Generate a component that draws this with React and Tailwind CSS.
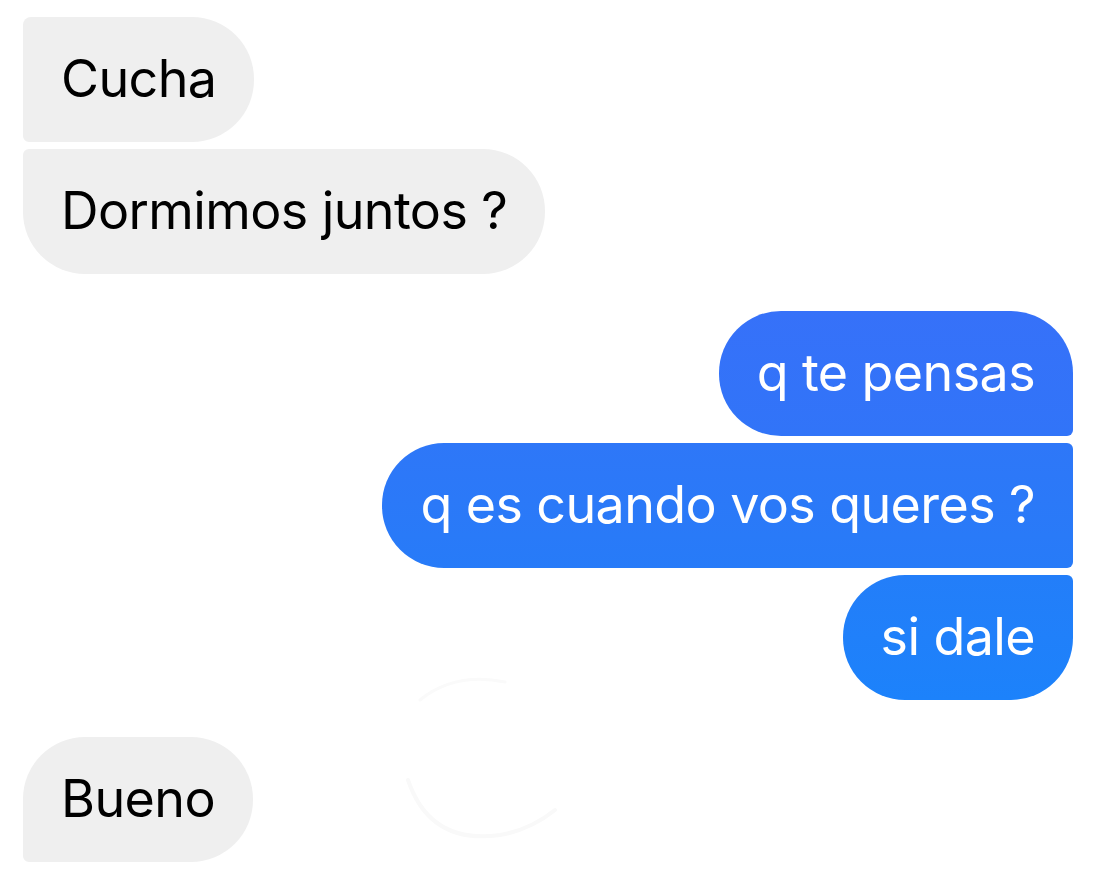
import React from 'react';

// rounded corners per position in a run of messages
const incoming = [
  { id: 1, text: 'Cucha', shape: 'rounded-tl-[8px] rounded-bl-[6px] rounded-r-[62px]' },
  { id: 2, text: 'Dormimos juntos ?', shape: 'rounded-tl-[6px] rounded-bl-[62px] rounded-r-[62px]' },
];

const outgoing = [
  { id: 3, text: 'q te pensas', shape: 'rounded-l-[62px] rounded-tr-[62px] rounded-br-[6px]', bg: 'from-[#3671f9] to-[#3174f8]' },
  { id: 4, text: 'q es cuando vos queres ?', shape: 'rounded-l-[62px] rounded-r-[6px]', bg: 'from-[#2e77f8] to-[#277bf8]' },
  { id: 5, text: 'si dale', shape: 'rounded-l-[62px] rounded-tr-[6px] rounded-br-[62px]', bg: 'from-[#237ef9] to-[#1c82fb]' },
];

const Bubble = ({ text, className }) => (
  <div className={`h-[125px] flex items-center px-[38px] text-[52px] leading-none tracking-[-0.6px] ${className}`}>
    <span className="-mt-[2px]">{text}</span>
  </div>
);

const App = () => {
  return (
    <div
      className="relative w-[1097px] h-[869px] bg-white overflow-hidden pl-[23px] pr-[24px] pt-[17px]"
      style={{ fontFamily: 'Inter, "Liberation Sans", sans-serif' }}
    >
      {/* received */}
      <div className="flex flex-col items-start gap-[7px]">
        {incoming.map((m) => (
          <Bubble key={m.id} text={m.text} className={`bg-[#efefef] text-black ${m.shape}`} />
        ))}
      </div>

      {/* sent */}
      <div className="flex flex-col items-end gap-[7px] mt-[37px]">
        {outgoing.map((m) => (
          <Bubble key={m.id} text={m.text} className={`bg-linear-to-b ${m.bg} text-white ${m.shape}`} />
        ))}
      </div>

      <div className="flex flex-col items-start mt-[37px]">
        <Bubble text="Bueno" className="bg-[#efefef] text-black rounded-tl-[62px] rounded-bl-[6px] rounded-r-[62px]" />
      </div>

      <svg className="absolute left-[380px] top-[660px] pointer-events-none" width="200" height="190" viewBox="0 0 200 190">
        <path d="M40 40 Q75 12 125 22" fill="none" stroke="#fafafa" strokeWidth="3" strokeLinecap="round" />
        <path d="M28 120 Q50 185 120 175 Q150 170 175 150" fill="none" stroke="#f9f9f9" strokeWidth="4" strokeLinecap="round" />
      </svg>
    </div>
  );
};

export default App;
